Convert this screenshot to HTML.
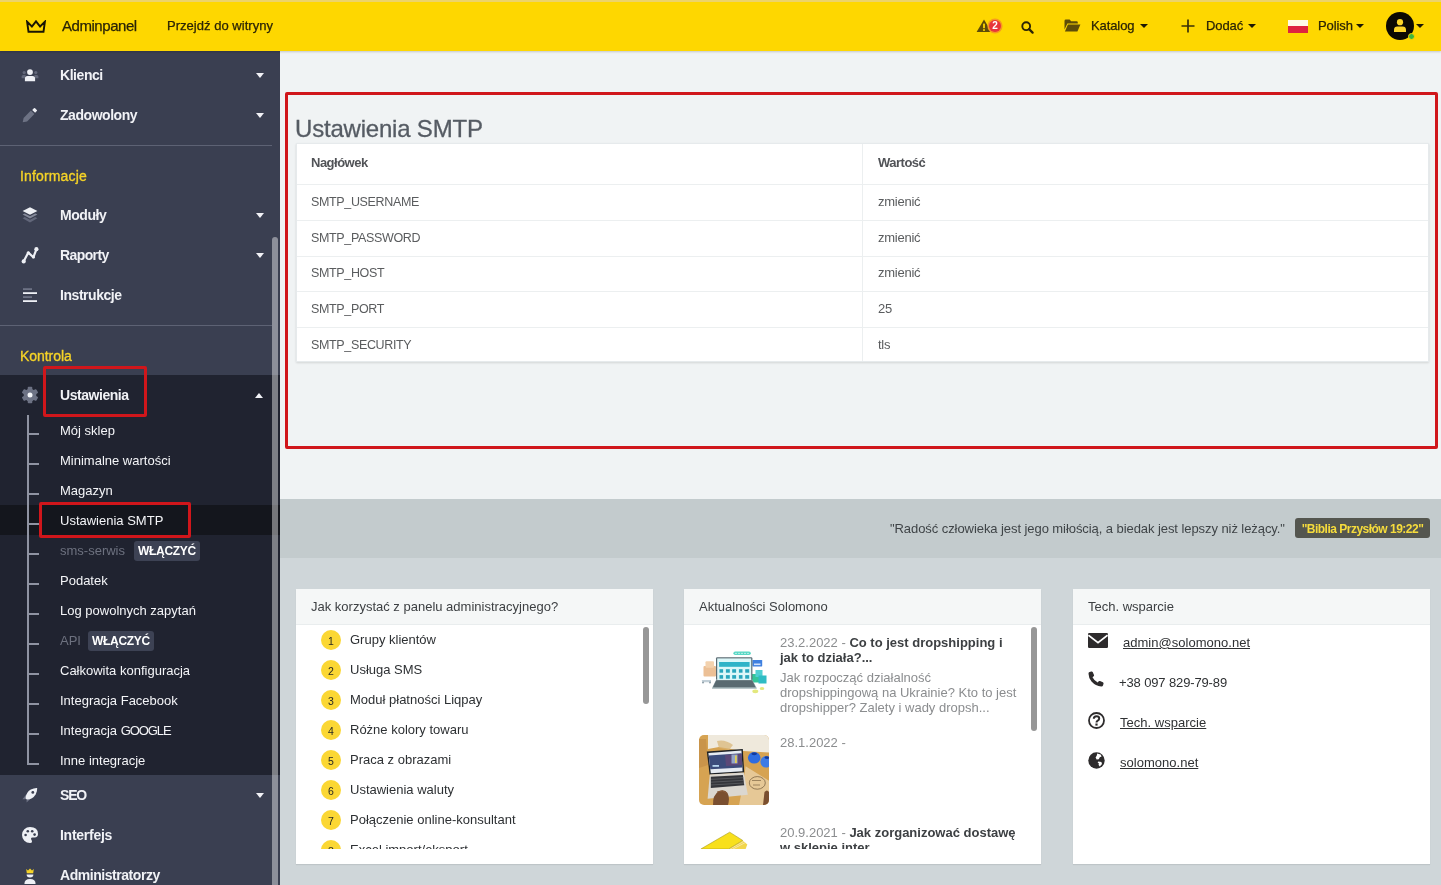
<!DOCTYPE html>
<html lang="pl">
<head>
<meta charset="utf-8">
<title>Ustawienia SMTP</title>
<style>
*{box-sizing:border-box;margin:0;padding:0}
html,body{width:1441px;height:885px;overflow:hidden;background:#f0f3f4;font-family:"Liberation Sans",sans-serif;color:#515253}
body{position:relative}
#topbar,#sidebar,#title,#tbl,#quote,#qb,.card{will-change:transform}
a{color:inherit;text-decoration:none}
.abs{position:absolute}
/* ---------- top bar ---------- */
#topbar{position:absolute;left:0;top:0;width:1441px;height:51px;background:#fed700;z-index:20;box-shadow:0 1px 2px rgba(0,0,0,.18)}
#topbar:before{content:"";position:absolute;left:0;top:0;width:100%;height:2px;background:#ecd36a}
#topbar .t{position:absolute;white-space:nowrap;color:#2b2405;line-height:1;-webkit-text-stroke:.25px #2b2405}
.caret{position:absolute;width:0;height:0;border-left:4px solid transparent;border-right:4px solid transparent;border-top:4px solid #1c1804}
/* ---------- sidebar ---------- */
#sidebar{position:absolute;left:0;top:51px;width:280px;height:834px;background:#3a3f51;z-index:10;overflow:hidden}
#sidebar .mi{position:absolute;left:0;width:280px;height:40px}
#sidebar .mi .lbl{position:absolute;left:60px;top:0;line-height:40px;font-size:14px;font-weight:bold;color:#f1f2f6;white-space:nowrap;letter-spacing:-.45px}
#sidebar .mi svg{position:absolute}
#sidebar .hd{position:absolute;left:20px;font-size:14px;color:#f5d327;white-space:nowrap;line-height:16px;letter-spacing:.15px;-webkit-text-stroke:.35px #f5d327}
#sidebar .dv{position:absolute;left:0;width:272px;height:1px;background:#5d6274}
.cd{position:absolute;left:256px;width:0;height:0;border-left:4.5px solid transparent;border-right:4.5px solid transparent;border-top:5px solid #f1f2f6}
.cu{position:absolute;left:255px;width:0;height:0;border-left:4.5px solid transparent;border-right:4.5px solid transparent;border-bottom:5px solid #f1f2f6}
#open{position:absolute;left:0;top:324px;width:280px;height:400px;background:#202330}
#open .si{position:absolute;left:0;width:280px;height:30px}
#open .si .lbl{position:absolute;left:60px;top:1px;line-height:30px;font-size:13px;color:#f4f5f8;white-space:nowrap;letter-spacing:0}
#open .si.dim .lbl{color:#6d717f}
#open .si .tick{position:absolute;left:29px;top:18px;width:10px;height:2px;background:#8f93a2}
#open .si.act{background:#14161d}
.badge{position:absolute;top:6px;height:20px;border-radius:3px;background:#3d4254;color:#fff;font-size:12px;font-weight:bold;line-height:20px;padding:0 4px;letter-spacing:-.3px;white-space:nowrap}
#sbthumb{position:absolute;left:272px;top:186px;width:6px;height:660px;border-radius:3px;background:rgba(255,255,255,.42)}
.redbox{position:absolute;border:3px solid #d0161b;border-radius:2px;z-index:30}
/* ---------- main ---------- */
#title{position:absolute;left:295px;top:114px;font-size:24px;line-height:30px;color:#555b63;-webkit-text-stroke:.3px #555b63;white-space:nowrap;letter-spacing:-.2px}
#tbl{position:absolute;left:296px;top:143px;width:1133px;height:219px;background:#fff;box-shadow:0 1px 2px rgba(0,0,0,.12);border:1px solid #e6eaec}
#tbl .r{position:absolute;left:0;width:1131px;height:1px;background:#eceff0}
#tbl .v{position:absolute;left:565px;top:0;width:1px;height:217px;background:#eceff0}
#tbl .c{position:absolute;font-size:13px;line-height:16px;color:#5a5c5e;white-space:nowrap;letter-spacing:-.25px}
#tbl .c.h{font-weight:bold;color:#515357;letter-spacing:-.5px}
#tbl .c.k{letter-spacing:-.35px;font-size:12.5px}
/* ---------- footer ---------- */
#fband{position:absolute;left:280px;top:499px;width:1161px;height:59px;background:#c3cbcd}
#flow{position:absolute;left:280px;top:558px;width:1161px;height:327px;background:#cfd6d9}
#quote{position:absolute;left:890px;top:521px;font-size:13px;line-height:16px;color:#3f4447;white-space:nowrap;letter-spacing:-.07px}
#qb{position:absolute;left:1295px;top:518px;width:135px;height:20px;border-radius:3px;background:#54564f;color:#f6dc3c;font-size:12px;font-weight:bold;line-height:22px;text-align:center;white-space:nowrap;letter-spacing:-.51px}
.card{position:absolute;top:589px;height:275px;background:#fff;box-shadow:0 1px 1px rgba(0,0,0,.08);overflow:hidden}
.card .ch{position:absolute;left:0;top:0;width:100%;height:36px;background:#f5f7f7;border-bottom:1px solid #e9edee}
.card .ch span{position:absolute;left:15px;top:10px;font-size:13px;line-height:16px;color:#3d4043;white-space:nowrap;letter-spacing:0}
.li{position:absolute;left:0;width:340px;height:30px}
.li .n{position:absolute;left:25px;top:5px;width:20px;height:20px;border-radius:10px;background:#fbd734;color:#2a2a22;font-size:10.5px;line-height:20px;padding-top:1px;text-align:center}
.li .x{position:absolute;left:54px;top:6px;font-size:13px;line-height:18px;color:#2d3033;white-space:nowrap;letter-spacing:0}
.sth{position:absolute;width:6px;border-radius:3px;background:#979797}
.nw{position:absolute;left:96px;font-size:13px;line-height:15px;color:#8b8d8f;white-space:nowrap;letter-spacing:0}
.nw b{color:#3d4043}
.ct{position:absolute;font-size:13px;line-height:16px;color:#2f3133;white-space:nowrap;letter-spacing:.02px}
.ct.u{text-decoration:underline}
</style>
</head>
<body>

<!-- ================= TOP BAR ================= -->
<div id="topbar">
  <svg class="abs" style="left:26px;top:19.5px" width="20" height="13" viewBox="0 0 20 13"><path d="M1.1 1.7 L5.9 6.5 L10 1.3 L14.1 6.5 L18.9 1.7 L17.5 11.7 L2.5 11.7 Z" fill="none" stroke="#1a1503" stroke-width="1.9" stroke-linejoin="miter"/></svg>
  <span class="t" style="left:62px;top:18px;font-size:15px;letter-spacing:-.45px">Adminpanel</span>
  <span class="t" style="left:167px;top:19px;font-size:13px;letter-spacing:.03px">Przejdź do witryny</span>

  <!-- warning + badge -->
  <svg class="abs" style="left:976px;top:19px" width="16" height="14" viewBox="0 0 16 14"><path d="M8 0.6 L15.4 13 L0.6 13 Z" fill="#5d4c08"/><rect x="7.1" y="4.6" width="1.8" height="4.6" fill="#fed700"/><rect x="7.1" y="10.2" width="1.8" height="1.7" fill="#fed700"/></svg>
    <div class="abs" style="left:989px;top:20px;width:12px;height:12px;border-radius:6px;background:#e8343a;box-shadow:0 0 0 1.6px #f79a20;color:#fff;font-size:10px;font-weight:bold;line-height:12px;text-align:center">2</div>
  <!-- search -->
  <svg class="abs" style="left:1021px;top:21px" width="13" height="13" viewBox="0 0 13 13"><circle cx="5.2" cy="5.2" r="3.9" fill="none" stroke="#2b2405" stroke-width="1.9"/><path d="M8.1 8.1 L11.6 11.6" stroke="#2b2405" stroke-width="2.2" stroke-linecap="round"/></svg>
  <!-- folder -->
  <svg class="abs" style="left:1064px;top:19px" width="17" height="13" viewBox="0 0 17 13"><path d="M0.5 2 Q0.5 0.6 1.9 0.6 L5.6 0.6 L7.2 2.2 L12.6 2.2 Q13.8 2.2 13.8 3.4 L13.8 4.4 L3.4 4.4 L0.5 10.4 Z" fill="#5d4c08"/><path d="M3.9 5.4 L16.4 5.4 L13.4 12.4 L0.9 12.4 Z" fill="#5d4c08"/></svg>
  <span class="t" style="left:1091px;top:19px;font-size:13px;letter-spacing:-.1px">Katalog</span>
  <div class="caret" style="left:1140px;top:24px"></div>
  <!-- plus -->
  <svg class="abs" style="left:1181px;top:19px" width="14" height="14" viewBox="0 0 14 14"><path d="M7 0.5 V13.5 M0.5 7 H13.5" stroke="#3a3007" stroke-width="1.7"/></svg>
  <span class="t" style="left:1206px;top:19px;font-size:13px;letter-spacing:-.1px">Dodać</span>
  <div class="caret" style="left:1248px;top:24px"></div>
  <!-- flag -->
  <div class="abs" style="left:1288px;top:20px;width:20px;height:13px;background:#fffbe8"></div>
  <div class="abs" style="left:1288px;top:26px;width:20px;height:7px;background:#de2440"></div>
  <span class="t" style="left:1318px;top:19px;font-size:13px;letter-spacing:-.1px">Polish</span>
  <div class="caret" style="left:1356px;top:24px"></div>
  <!-- avatar -->
  <div class="abs" style="left:1386px;top:12px;width:28px;height:28px;border-radius:14px;background:#0b0903"></div>
  <svg class="abs" style="left:1393px;top:18px" width="14" height="15" viewBox="0 0 14 15"><circle cx="7" cy="4.2" r="3.1" fill="#fbd52a"/><path d="M1 14 V12 Q1 8.6 4.4 8.6 H9.6 Q13 8.6 13 12 V14 Z" fill="#fbd52a"/></svg>
  <div class="abs" style="left:1408px;top:33px;width:7px;height:7px;border-radius:4px;background:#3fb83c;border:1px solid #fed700"></div>
  <div class="caret" style="left:1416px;top:24px"></div>
</div>

<!-- ================= SIDEBAR ================= -->
<div id="sidebar">
  <!-- Klienci -->
  <div class="mi" style="top:4px">
    <svg style="left:21px;top:11px" width="18" height="18" viewBox="0 0 18 18"><circle cx="3.2" cy="6.6" r="1.6" fill="#62677a"/><circle cx="14.8" cy="6.6" r="1.6" fill="#62677a"/><path d="M0.6 12.2 V10.6 Q0.6 9 2.2 9 H4.6 V12.2 Z M17.4 12.2 V10.6 Q17.4 9 15.8 9 H13.4 V12.2 Z" fill="#62677a"/><circle cx="9" cy="6.1" r="2.9" fill="#eef0f5"/><path d="M3.9 15.2 V12.6 Q3.9 10 6.5 10 H11.5 Q14.1 10 14.1 12.6 V15.2 Z" fill="#eef0f5"/></svg>
    <span class="lbl">Klienci</span><div class="cd" style="top:18px"></div>
  </div>
  <!-- Zadowolony -->
  <div class="mi" style="top:44px">
    <svg style="left:21px;top:11px" width="18" height="18" viewBox="0 0 18 18"><path d="M1.7 16.3 L2.6 11.9 L9.9 4.6 L13.4 8.1 L6.1 15.4 Z" fill="#6d7284"/><path d="M11.2 3.9 L12.9 2.2 Q13.5 1.6 14.1 2.2 L15.8 3.9 Q16.4 4.5 15.8 5.1 L14.1 6.8 Z" fill="#eef0f5"/></svg>
    <span class="lbl">Zadowolony</span><div class="cd" style="top:18px"></div>
  </div>
  <div class="dv" style="top:94px"></div>
  <div class="hd" style="top:117px">Informacje</div>
  <!-- Moduly -->
  <div class="mi" style="top:144px">
    <svg style="left:21px;top:11px" width="18" height="18" viewBox="0 0 18 18"><path d="M9 1.2 L16.4 5 L9 8.8 L1.6 5 Z" fill="#eef0f5"/><path d="M1.6 8.6 L3.8 7.5 L9 10.2 L14.2 7.5 L16.4 8.6 L9 12.6 Z" fill="#858a9b"/><path d="M1.6 12.2 L3.8 11.1 L9 13.8 L14.2 11.1 L16.4 12.2 L9 16.4 Z" fill="#62677a"/></svg>
    <span class="lbl">Moduły</span><div class="cd" style="top:18px"></div>
  </div>
  <!-- Raporty -->
  <div class="mi" style="top:184px">
    <svg style="left:21px;top:11px" width="18" height="18" viewBox="0 0 18 18"><path d="M2.6 15.4 L7.3 6.6 L12.4 11.2 L15.4 3.3" fill="none" stroke="#eef0f5" stroke-width="2.2" stroke-linejoin="round" stroke-linecap="round"/><circle cx="2.7" cy="15.4" r="2.1" fill="#eef0f5"/><circle cx="15.4" cy="3.2" r="2.1" fill="#eef0f5"/><circle cx="7.3" cy="6.8" r="1.6" fill="#eef0f5"/><circle cx="12.4" cy="11" r="1.6" fill="#eef0f5"/></svg>
    <span class="lbl" style="letter-spacing:-.6px">Raporty</span><div class="cd" style="top:18px"></div>
  </div>
  <!-- Instrukcje -->
  <div class="mi" style="top:224px">
    <svg style="left:21px;top:11px" width="18" height="18" viewBox="0 0 18 18"><rect x="2" y="2.2" width="9" height="1.8" fill="#6d7284"/><rect x="2" y="6.2" width="14" height="1.8" fill="#eef0f5"/><rect x="2" y="10.2" width="9" height="1.8" fill="#6d7284"/><rect x="2" y="14.2" width="14" height="1.8" fill="#eef0f5"/></svg>
    <span class="lbl">Instrukcje</span>
  </div>
  <div class="dv" style="top:274px"></div>
  <div class="hd" style="top:297px;letter-spacing:-.05px">Kontrola</div>

  <div id="open">
    <svg class="abs" style="left:21px;top:11px" width="18" height="18" viewBox="0 0 18 18"><g fill="#6d7284"><circle cx="9" cy="9" r="6.3"/><rect x="6.7" y="0.7" width="4.6" height="16.6" rx="1"/><rect x="6.7" y="0.7" width="4.6" height="16.6" rx="1" transform="rotate(60 9 9)"/><rect x="6.7" y="0.7" width="4.6" height="16.6" rx="1" transform="rotate(120 9 9)"/></g><circle cx="9" cy="9" r="2.5" fill="#f4f5f8"/></svg>
    <span class="abs" style="left:60px;top:0;line-height:40px;font-size:14px;font-weight:bold;color:#f1f2f6;white-space:nowrap;letter-spacing:-.45px" id="ustlbl">Ustawienia</span>
    <div class="cu" style="top:18px"></div>
    <div class="si" style="top:40px"><div class="tick"></div><span class="lbl">Mój sklep</span></div>
    <div class="si" style="top:70px"><div class="tick"></div><span class="lbl">Minimalne wartości</span></div>
    <div class="si" style="top:100px"><div class="tick"></div><span class="lbl">Magazyn</span></div>
    <div class="si act" style="top:130px"><div class="tick"></div><span class="lbl">Ustawienia SMTP</span></div>
    <div class="si dim" style="top:160px"><div class="tick"></div><span class="lbl">sms-serwis</span><span class="badge" style="left:134px">WŁĄCZYĆ</span></div>
    <div class="si" style="top:190px"><div class="tick"></div><span class="lbl">Podatek</span></div>
    <div class="si" style="top:220px"><div class="tick"></div><span class="lbl">Log powolnych zapytań</span></div>
    <div class="si dim" style="top:250px"><div class="tick"></div><span class="lbl">API</span><span class="badge" style="left:88px">WŁĄCZYĆ</span></div>
    <div class="si" style="top:280px"><div class="tick"></div><span class="lbl">Całkowita konfiguracja</span></div>
    <div class="si" style="top:310px"><div class="tick"></div><span class="lbl">Integracja Facebook</span></div>
    <div class="si" style="top:340px"><div class="tick"></div><span class="lbl">Integracja <span style="letter-spacing:-1.1px">GOOGLE</span></span></div>
    <div class="si" style="top:370px"><div class="tick"></div><span class="lbl">Inne integracje</span></div>
    <div class="abs" style="left:27px;top:40px;width:2px;height:350px;background:#8f93a2"></div>
  </div>

  <!-- SEO -->
  <div class="mi" style="top:724px">
    <svg style="left:21px;top:11px" width="18" height="18" viewBox="0 0 18 18"><path d="M1.4 13.2 L5.4 8.2 L7.6 8.2 L4.4 13.2 Z M5.6 16.4 L5.6 13.6 L9.8 10.4 L9.8 12.4 Z" fill="#6d7284"/><path d="M4.6 12.4 Q5 6.4 9.8 3.6 Q13.2 1.8 16.2 2 Q16.4 5 14.6 8.4 Q11.8 13.2 5.8 13.6 Z" fill="#eef0f5"/><circle cx="11.8" cy="6.4" r="1.4" fill="#3a3f51"/></svg>
    <span class="lbl" style="letter-spacing:-1.2px">SEO</span><div class="cd" style="top:18px"></div>
  </div>
  <!-- Interfejs -->
  <div class="mi" style="top:764px">
    <svg style="left:21px;top:11px" width="18" height="18" viewBox="0 0 18 18"><path d="M9 1 A8 8 0 1 0 9 17 Q11 17 11 15.4 Q11 14.6 10.5 14 Q10 13.4 10 12.8 Q10 11.4 11.6 11.4 H13.6 Q17 11.4 17 8 Q17 1 9 1 Z" fill="#eef0f5"/><circle cx="4.6" cy="9" r="1.3" fill="#3a3f51"/><circle cx="6.8" cy="5.2" r="1.3" fill="#3a3f51"/><circle cx="11.2" cy="5.2" r="1.3" fill="#3a3f51"/><circle cx="13.6" cy="8.6" r="1.3" fill="#3a3f51"/></svg>
    <span class="lbl" style="letter-spacing:-.27px">Interfejs</span>
  </div>
  <!-- Administratorzy -->
  <div class="mi" style="top:804px">
    <svg style="left:21px;top:11px" width="18" height="20" viewBox="0 0 18 20"><path d="M5.2 3 L7 4.6 L9 2.6 L11 4.6 L12.8 3 L12.2 7.2 L5.8 7.2 Z" fill="#f5d327"/><path d="M5.6 8.4 H12.4 Q12.4 11.4 9 11.4 Q5.6 11.4 5.6 8.4 Z" fill="#eef0f5"/><path d="M3.4 18 Q3.4 13 9 13 Q14.6 13 14.6 18 Z" fill="#eef0f5"/></svg>
    <span class="lbl">Administratorzy</span>
  </div>
  <div id="sbthumb"></div>
</div>

<!-- ================= MAIN ================= -->
<div id="title">Ustawienia SMTP</div>
<div id="tbl">
  <div class="r" style="top:40px"></div>
  <div class="r" style="top:76px"></div>
  <div class="r" style="top:111.5px"></div>
  <div class="r" style="top:147px"></div>
  <div class="r" style="top:182.5px"></div>
  <div class="v"></div>
  <span class="c h" style="left:14px;top:10.5px">Nagłówek</span><span class="c h" style="left:581px;top:10.5px">Wartość</span>
  <span class="c k" style="left:14px;top:50px">SMTP_USERNAME</span><span class="c" style="left:581px;top:50px">zmienić</span>
  <span class="c k" style="left:14px;top:86px">SMTP_PASSWORD</span><span class="c" style="left:581px;top:86px">zmienić</span>
  <span class="c k" style="left:14px;top:121px">SMTP_HOST</span><span class="c" style="left:581px;top:121px">zmienić</span>
  <span class="c k" style="left:14px;top:157px">SMTP_PORT</span><span class="c" style="left:581px;top:157px">25</span>
  <span class="c k" style="left:14px;top:192.5px">SMTP_SECURITY</span><span class="c" style="left:581px;top:192.5px">tls</span>
</div>
<div class="redbox" style="left:285px;top:92px;width:1153px;height:357px"></div>
<div class="redbox" style="left:43px;top:366px;width:104px;height:51px"></div>
<div class="redbox" style="left:39px;top:502px;width:152px;height:36px"></div>

<!-- ================= FOOTER ================= -->
<div id="fband"></div>
<div id="flow"></div>
<div id="quote">"Radość człowieka jest jego miłością, a biedak jest lepszy niż leżący."</div>
<div id="qb">"Biblia Przysłów 19:22"</div>

<!-- card 1 -->
<div class="card" style="left:296px;width:357px">
  <div class="ch"><span>Jak korzystać z panelu administracyjnego?</span></div>
  <div class="abs" style="left:0;top:37px;width:357px;height:223px;overflow:hidden">
    <div class="li" style="top:-1px"><span class="n">1</span><span class="x">Grupy klientów</span></div>
    <div class="li" style="top:29px"><span class="n">2</span><span class="x">Usługa SMS</span></div>
    <div class="li" style="top:59px"><span class="n">3</span><span class="x">Moduł płatności Liqpay</span></div>
    <div class="li" style="top:89px"><span class="n">4</span><span class="x">Różne kolory towaru</span></div>
    <div class="li" style="top:119px"><span class="n">5</span><span class="x">Praca z obrazami</span></div>
    <div class="li" style="top:149px"><span class="n">6</span><span class="x">Ustawienia waluty</span></div>
    <div class="li" style="top:179px"><span class="n">7</span><span class="x">Połączenie online-konsultant</span></div>
    <div class="li" style="top:209px"><span class="n">8</span><span class="x">Excel import/eksport</span></div>
  </div>
  <div class="sth" style="left:347px;top:38px;height:77px"></div>
</div>

<!-- card 2 -->
<div class="card" style="left:684px;width:357px">
  <div class="ch"><span>Aktualności Solomono</span></div>
  <div class="abs" style="left:0;top:37px;width:357px;height:223px;overflow:hidden" id="news">
    <svg class="abs" style="left:15px;top:10px" width="70" height="60" viewBox="0 0 70 60"><rect x="34.400" y="15.600" width="17.400" height="3.500" rx="1.750" fill="#5ad8c6"/><g fill="#fff"><circle cx="37" cy="17.350" r=".7"/><circle cx="40" cy="17.350" r=".7"/><circle cx="43" cy="17.350" r=".7"/><circle cx="46" cy="17.350" r=".7"/><circle cx="49" cy="17.350" r=".7"/></g><rect x="4.500" y="30" width="12.500" height="10.500" rx="1" fill="#ecc096"/><rect x="6.500" y="25.300" width="8.500" height="6.500" rx="1" fill="#f3d2ae"/><path d="M2.700 44 H12 V46.200 H3.700 Z" fill="#c3d0d8"/><circle cx="4" cy="46.500" r="1" fill="#8d9ea8"/><circle cx="11" cy="46.500" r="1" fill="#8d9ea8"/><rect x="53.400" y="24" width="9.800" height="6.400" rx=".6" fill="#3f80e0"/><rect x="55" y="27.500" width="6.500" height="1.600" fill="#cfe0fa"/><rect x="53" y="38" width="7" height="8.500" fill="#34c69a"/><rect x="56.500" y="34" width="7" height="7" fill="#4fd0d2"/><rect x="59.500" y="39.500" width="8" height="8" fill="#2fbcc4"/><rect x="17" y="21.200" width="36.400" height="22.900" rx="1.300" fill="#5b6b73"/><rect x="18.200" y="22.400" width="34" height="21.600" fill="#dcf7f9"/><rect x="20.100" y="26" width="30.500" height="4.800" fill="#2fb3c8"/><g fill="#2aa6bd"><rect x="20.500" y="33.200" width="3.600" height="3.500"/><rect x="26.900" y="33.200" width="3.900" height="3.500"/><rect x="33.200" y="33.200" width="3.900" height="3.500"/><rect x="39.900" y="33.200" width="3.600" height="3.500"/><rect x="46.200" y="33.200" width="4" height="3.500"/><rect x="20.500" y="39.100" width="3.600" height="3.600"/><rect x="26.900" y="39.100" width="3.900" height="3.600"/><rect x="33.200" y="39.100" width="3.900" height="3.600"/><rect x="39.900" y="39.100" width="3.600" height="3.600"/><rect x="46.200" y="39.100" width="4" height="3.600"/></g><path d="M17 43.900 H53.400 L57.700 52 V52.800 H13 V52 Z" fill="#a3b4b9"/><path d="M17.200 44.300 H53.200 L56.600 51.300 H13.900 Z" fill="#5a6a71"/><ellipse cx="56.300" cy="55.300" rx="3" ry="1.900" fill="#e3e87d"/><ellipse cx="63" cy="52.500" rx="2.300" ry="1.500" fill="#e3e87d"/></svg>
    <svg class="abs" style="left:15px;top:109px" width="70" height="70" viewBox="0 0 70 70"><defs><clipPath id="rc"><rect x="0" y="0" width="70" height="70" rx="5"/></clipPath></defs><g clip-path="url(#rc)"><rect width="70" height="70" fill="#d6a352"/><path d="M9 0 H70 V17.500 L44 16 L20 12 L9 14 Z" fill="#efe9dc"/><path d="M18 6 Q26 4 34 10 L30 15 L20 13 Z" fill="#d9b474" opacity=".7"/><path d="M0 4 H7 L9 30 L0 33 Z" fill="#c9944a"/><path d="M46.600 31.200 L70 45.700 V70 H40 L44 50 Z" fill="#e6c896"/><ellipse cx="58.300" cy="47.900" rx="8" ry="6.300" fill="none" stroke="#6d5638" stroke-width=".7"/><path d="M53 45.500 H62 M54 50 H61" stroke="#6d5638" stroke-width=".6"/><ellipse cx="55.200" cy="22.800" rx="6.300" ry="5.800" fill="#2e6ce0"/><ellipse cx="55.200" cy="18.800" rx="2.800" ry="1.400" fill="#143a9c"/><ellipse cx="67" cy="26.800" rx="5.600" ry="5.800" fill="#3d7be6"/><ellipse cx="68" cy="22.600" rx="2.600" ry="1.300" fill="#143a9c"/><path d="M7.800 16.600 L43.800 14 L45.200 37.600 L10.600 39.800 Z" fill="#1d2126"/><path d="M9.400 17.900 L42.500 15.600 L43.600 36.200 L11.800 38.200 Z" fill="#e6ebf2"/><path d="M9.700 20.400 L42.700 18.200 L43.300 32.400 L11.300 34.200 Z" fill="#3c4c7c"/><path d="M26 20 L42.700 18.700 L43.200 30 L27 31 Z" fill="#5b4878"/><rect x="32.500" y="19.500" width="6" height="9" fill="#9db6d6" opacity=".85"/><rect x="36" y="20.500" width="1.800" height="7.500" fill="#e3cf55"/><rect x="13.500" y="30" width="6.500" height="1.800" fill="#b6d4ee"/><path d="M10.800 39.600 L44.800 37.500 L48.800 59.700 L8.600 63.700 Z" fill="#dbd7d0"/><path d="M11.800 41.700 L43.900 40 L45.200 50.200 L11.800 52.900 Z" fill="#34353a"/><path d="M12 44.400 L44.400 42.600 M12 47.200 L44.800 45.300 M12 50 L45 48" stroke="#77787c" stroke-width=".5"/><path d="M14 70 Q13.500 60 20 56 Q26 54 28.500 58 Q31 63 29 70 Z" fill="#7a4f30"/><path d="M18 57 Q24 54.500 28 58" stroke="#8a5c3b" stroke-width="1" fill="none"/><path d="M64 70 L65.500 57 Q68 54 70 57 V70 Z" fill="#7a4e2e"/></g></svg>
    <svg class="abs" style="left:15px;top:203px" width="70" height="20" viewBox="0 0 70 20"><path d="M29.600 20 L43.700 11.400 L48.300 15.400 L46.600 20 Z" fill="#f2d64c"/><path d="M31 20 L44.800 12.400 M34 20 L46.200 13.600" stroke="#f7e7a8" stroke-width=".9"/><path d="M2.200 19.800 L30.700 3.200 L43.700 11.400 L29.600 20 H2.200 Z" fill="#f8e01c" stroke="#a79a1c" stroke-width=".6" stroke-linejoin="round"/></svg>
    <span class="nw" style="top:9px">23.2.2022 - <b>Co to jest dropshipping i</b></span>
    <span class="nw" style="top:24px"><b>jak to działa?...</b></span>
    <span class="nw" style="top:44px">Jak rozpocząć działalność</span>
    <span class="nw" style="top:59px">dropshippingową na Ukrainie? Kto to jest</span>
    <span class="nw" style="top:74px">dropshipper? Zalety i wady dropsh...</span>
    <span class="nw" style="top:109px">28.1.2022 -</span>
    <span class="nw" style="top:199px">20.9.2021 - <b>Jak zorganizować dostawę</b></span>
    <span class="nw" style="top:214px"><b>w sklepie inter</b></span>
  </div>
  <div class="sth" style="left:347px;top:38px;height:104px"></div>
</div>

<!-- card 3 -->
<div class="card" style="left:1073px;width:357px">
  <div class="ch"><span>Tech. wsparcie</span></div>
  <svg class="abs" style="left:15px;top:44px" width="20" height="15" viewBox="0 0 20 15"><rect x="0" y="0" width="20" height="15" rx="1.2" fill="#2d2b2c"/><path d="M0.4 2.2 L10 9.6 L19.6 2.2" fill="none" stroke="#fff" stroke-width="1.7"/></svg>
  <svg class="abs" style="left:15px;top:82px" width="16" height="16" viewBox="0 0 16 16"><path d="M3.2 0.5 Q4.2 0.1 4.7 1.1 L6 4 Q6.3 4.8 5.7 5.3 L4.5 6.3 Q6 9.6 9.7 11.5 L10.7 10.3 Q11.2 9.7 12 10 L14.9 11.3 Q15.9 11.8 15.5 12.8 L15 14.4 Q14.6 15.6 13.3 15.5 Q7.6 15 3.5 10.5 Q0.6 7 0.5 2.7 Q0.4 1.5 1.6 1.1 Z" fill="#2d2b2c"/></svg>
  <svg class="abs" style="left:15px;top:122.5px" width="17" height="17" viewBox="0 0 17 17"><circle cx="8.5" cy="8.5" r="7.5" fill="none" stroke="#2d2b2c" stroke-width="1.8"/><path d="M5.8 6.8 Q5.8 4.2 8.5 4.2 Q11.2 4.2 11.2 6.5 Q11.2 7.8 9.7 8.6 Q8.5 9.3 8.5 10.5" fill="none" stroke="#2d2b2c" stroke-width="2"/><rect x="7.4" y="11.5" width="2.2" height="2.1" fill="#2d2b2c"/></svg>
  <svg class="abs" style="left:15px;top:162.5px" width="17" height="17" viewBox="0 0 17 17"><circle cx="8.5" cy="8.5" r="8.2" fill="#2d2b2c"/><path d="M9.2 1.6 L12.6 2.4 L13.6 4.4 L11.8 5.2 L10.8 7.2 L8.6 7.4 L7.6 5.6 L8.8 3.6 Z" fill="#fff"/><path d="M10.4 9.4 L13.4 10 L14 12 L11.8 14.6 L10.6 13 L10.8 11.2 L9.6 10.4 Z" fill="#fff"/></svg>
  <span class="ct u" style="left:50px;top:46px">admin@solomono.net</span>
  <span class="ct" style="left:46px;top:86px;letter-spacing:-.13px">+38 097 829-79-89</span>
  <span class="ct u" style="left:47px;top:126px">Tech. wsparcie</span>
  <span class="ct u" style="left:47px;top:166px">solomono.net</span>
</div>

</body>
</html>
